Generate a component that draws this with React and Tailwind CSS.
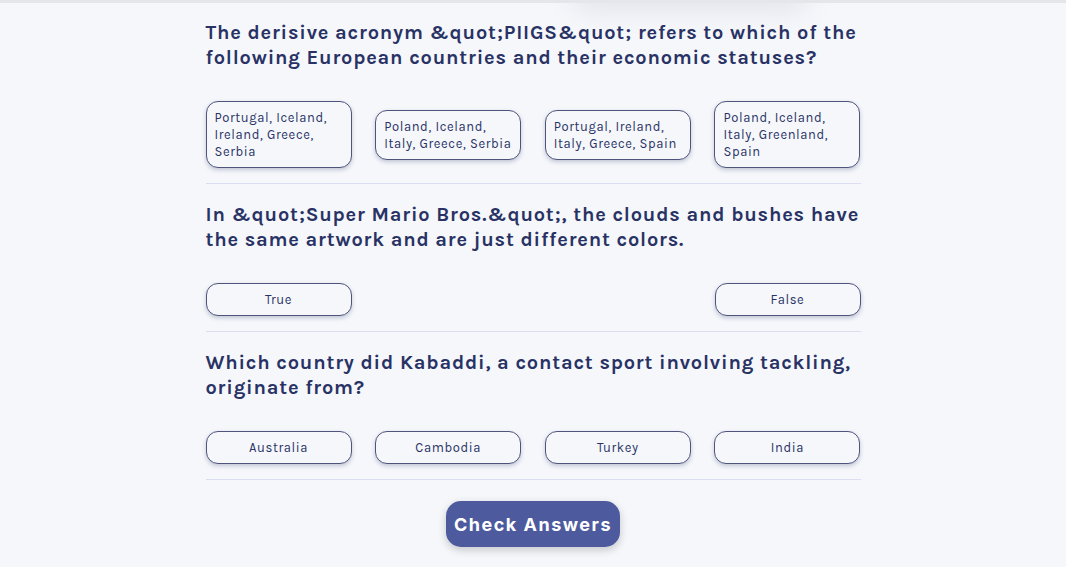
import React from "react";

const questions = [
  {
    q: "The derisive acronym &quot;PIIGS&quot; refers to which of the following European countries and their economic statuses?",
    answers: [
      "Portugal, Iceland, Ireland, Greece, Serbia",
      "Poland, Iceland, Italy, Greece, Serbia",
      "Portugal, Ireland, Italy, Greece, Spain",
      "Poland, Iceland, Italy, Greenland, Spain",
    ],
  },
  {
    q: "In &quot;Super Mario Bros.&quot;, the clouds and bushes have the same artwork and are just different colors.",
    answers: ["True", "False"],
  },
  {
    q: "Which country did Kabaddi, a contact sport involving tackling, originate from?",
    answers: ["Australia", "Cambodia", "Turkey", "India"],
  },
];

const Answer = ({ text, multi }) => (
  <button
    className={`w-[146px] border border-[#4f547c] rounded-[12px] bg-[#f5f7fb] shadow-[0_2px_4px_rgba(41,50,100,0.25)] text-[13px] leading-[17px] tracking-[0.6px] text-[#293264] py-[7px] px-[8px] ${
      multi ? "text-left" : "text-center"
    }`}
  >
    {text}
  </button>
);

export default function App() {
  return (
    <div
      className="relative min-h-[567px] bg-[#f5f7fb] overflow-hidden border-t-[3px] border-[#e4e6ea]"
      style={{ fontFamily: "Karla, 'Open Sans', sans-serif" }}
    >
      <div className="absolute -top-[30px] left-[570px] w-[240px] h-[40px] rounded-full bg-[#d9dbe0] blur-[12px] opacity-60" />
      <div className="relative w-[655px] mx-auto pt-[17px]">
        {questions.map((item, i) => (
          <div key={i} className="border-b border-[#dbdef0] pb-[15px] mb-[18px]">
            <h2 className="text-[20px] leading-[25px] font-bold text-[#293264] tracking-[0.8px] mb-[31px]">
              {item.q}
            </h2>
            <div className="flex justify-between items-center">
              {item.answers.map((a) => (
                <Answer key={a} text={a} multi={a.length > 20} />
              ))}
            </div>
          </div>
        ))}
        <div className="flex justify-center pt-[3px]">
          <button
            className="w-[174px] h-[46px] rounded-[15px] bg-[#4d5b9e] text-white text-[18px] font-bold tracking-[1.5px] shadow-[0_3px_8px_rgba(0,0,0,0.2)]"
            style={{ fontFamily: "Inter, sans-serif" }}
          >
            Check Answers
          </button>
        </div>
      </div>
    </div>
  );
}
